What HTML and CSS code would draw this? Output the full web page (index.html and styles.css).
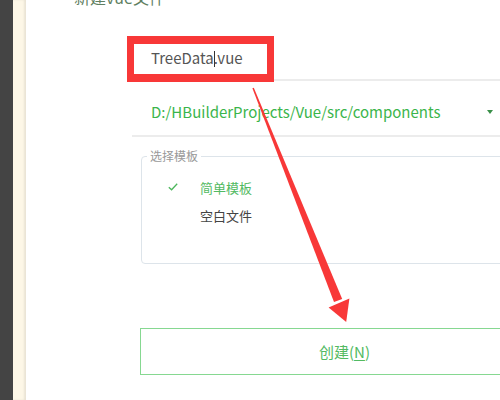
FILE: index.html
```html
<!DOCTYPE html>
<html lang="zh-CN">
<head>
  <meta charset="UTF-8">
  <title>新建vue文件</title>
  <link rel="stylesheet" href="styles.css">
</head>
<body>
  <div class="side-dark"></div>
  <div class="side-cream"></div>

  <main class="dialog">
    <h1 class="dialog-title">新建vue文件</h1>

    <div class="form">
      <div class="field name-field">
        <span class="name-text">TreeData<span class="caret"></span>.vue</span>
        <div class="mark-box"></div>
      </div>

      <div class="field path-field">
        <span class="path-text">D:/HBuilderProjects/Vue/src/components</span>
        <span class="dropdown"></span>
      </div>

      <fieldset class="templates">
        <legend>选择模板</legend>
        <div class="option active">
          <svg class="check" viewBox="0 0 10 8" fill="none"><path d="M0.8 4.2L3.6 6.8L9.2 0.8" stroke="#4cb75c" stroke-width="1.3"/></svg>
          <span>简单模板</span>
        </div>
        <div class="option">
          <span class="check"></span>
          <span>空白文件</span>
        </div>
      </fieldset>

      <button class="create-btn">创建(<u>N</u>)</button>
    </div>
  </main>

  <!-- annotation arrow drawn over the dialog -->
  <svg class="arrow" viewBox="0 0 500 400" width="500" height="400">
    <polygon points="252.4,88.3 253.8,87.7 342.2,299 334,302" fill="#f83838"/>
    <polygon points="328.6,307.4 349.4,298.6 346.2,322" fill="#f83838"/>
  </svg>
</body>
</html>
```

FILE: styles.css
```css
:root {
  --red: #f83838;
  --green: #3bb54b;
  --green-soft: #52ba62;
  --line: #ececec;
  --frame: #dde4ea;
}

html, body {
  height: 100%;
}

body {
  margin: 0;
  display: flex;
  overflow: hidden;
  background: #fff;
  font-family: "Noto Sans CJK SC", "Noto Sans", sans-serif;
  color: #444;
}

.side-dark {
  width: 13px;
  flex-shrink: 0;
  background: #444444;
}

.side-cream {
  width: 13px;
  flex-shrink: 0;
  background: #fdf7e7;
  box-shadow: inset -2px 0 2px rgba(0, 0, 0, 0.08);
}

.dialog {
  flex: 1;
  min-width: 0;
  padding-left: 1px;
}

.dialog-title {
  margin: -13px 0 0 47px;
  font-size: 16px;
  line-height: 20px;
  font-weight: normal;
  color: #5f7f62;
}

.form {
  width: 410px;
  margin: 29px 0 0 105px;
}

.field {
  position: relative;
  border-bottom: 2px solid var(--line);
}

.name-field {
  padding: 12px 0 11px 19px;
  line-height: 20px;
  font-size: 15px;
  color: #555;
}

.caret {
  display: inline-block;
  width: 1px;
  height: 16px;
  margin-right: -1px;
  background: #333;
  vertical-align: -3px;
}

.mark-box {
  position: absolute;
  left: -5px;
  top: 0;
  width: 133px;
  height: 30px;
  border: 8px solid var(--red);
  border-left-width: 7px;
  border-right-width: 7px;
}

.path-field {
  display: flex;
  align-items: center;
  padding: 22px 0 14px 19px;
  line-height: 18px;
  font-size: 15px;
  color: var(--green);
}

.path-text {
  flex: 1;
}

.dropdown {
  width: 0;
  height: 0;
  margin-right: 49px;
  border-left: 3px solid transparent;
  border-right: 3px solid transparent;
  border-top: 4px solid #3a8f48;
}

.templates {
  margin: 11px 0 0 9px;
  padding: 9px 0 34px 0;
  border: 1px solid var(--frame);
  border-radius: 4px;
}

.templates legend {
  margin-left: 5px;
  padding: 0 3px;
  font-size: 12px;
  line-height: 16px;
  color: #999;
}

.option {
  display: flex;
  align-items: center;
  height: 28px;
  padding-left: 26px;
  font-size: 13px;
  color: #444;
}

.option.active {
  color: var(--green-soft);
}

.check {
  width: 10px;
  height: 8px;
  margin-right: 22px;
}

.create-btn {
  display: block;
  width: 409px;
  height: 47px;
  margin: 64px 0 0 8px;
  border: 1.5px solid #86d891;
  background: #fff;
  font-family: inherit;
  font-size: 15px;
  color: var(--green-soft);
}

.create-btn u {
  text-underline-offset: 2px;
}

.arrow {
  position: absolute;
  left: 0;
  top: 0;
  pointer-events: none;
}
```
